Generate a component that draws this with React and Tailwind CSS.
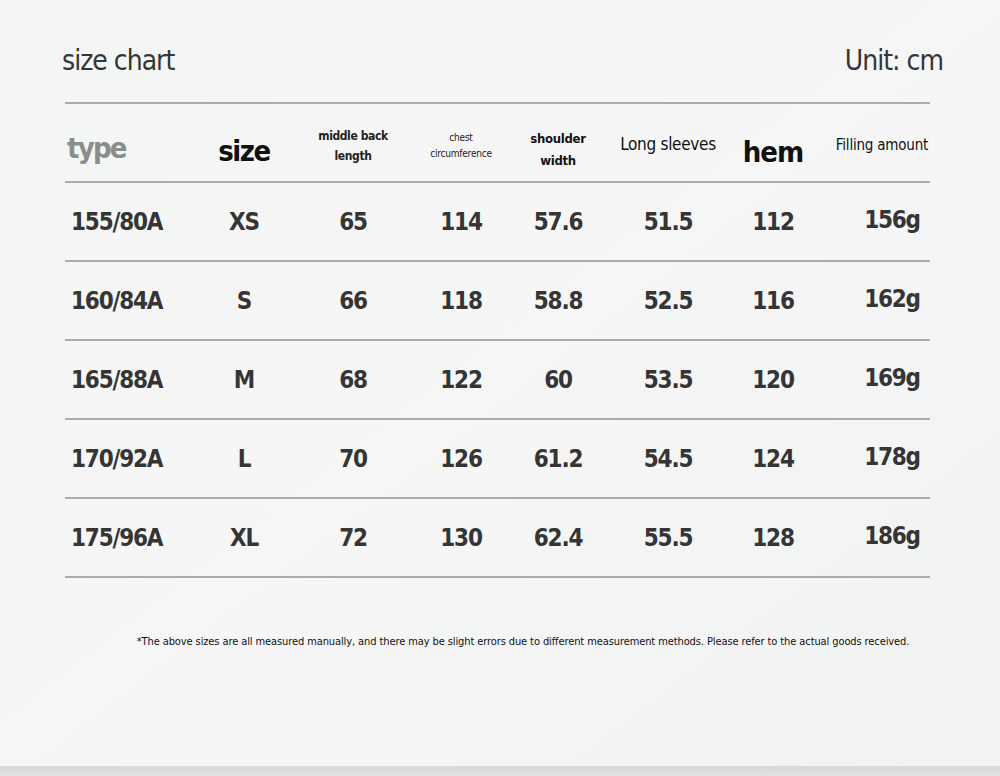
import React from "react";

const rows = [
  ["155/80A", "XS", "65", "114", "57.6", "51.5", "112", "156g"],
  ["160/84A", "S", "66", "118", "58.8", "52.5", "116", "162g"],
  ["165/88A", "M", "68", "122", "60", "53.5", "120", "169g"],
  ["170/92A", "L", "70", "126", "61.2", "54.5", "124", "178g"],
  ["175/96A", "XL", "72", "130", "62.4", "55.5", "128", "186g"],
];

const cols = "grid grid-cols-[125px_108px_110px_106px_88px_132px_78px_118px] items-center";

const SizeChart = () => {
  return (
    <div
      className="relative w-[1000px] h-[776px] overflow-hidden bg-gradient-to-br from-[#f4f5f5] via-[#f6f6f6] to-[#f1f2f2]"
      style={{ fontFamily: '"DejaVu Sans Condensed", "DejaVu Sans", sans-serif' }}
    >
      <div className="flex items-end justify-between pl-[62px] pr-[57px] pt-[33px] text-[#353535]">
        <h1 className="text-[28px] leading-[40px] tracking-[-1px]">size chart</h1>
        <div className="text-[28px] leading-[40px] tracking-[-1px] mt-[8px]">Unit: cm</div>
      </div>

      <div className="ml-[65px] mt-[21px] w-[865px] border-t-2 border-[#ababab]">
        {/* header */}
        <div className={`${cols} h-[79px] border-b-2 border-[#ababab] text-center leading-none`}>
          <div className="text-left pl-[2px] pt-[12px] text-[29px] font-bold tracking-[-1.8px] text-[#8c8c8c]">type</div>
          <div className="pt-[18px] text-[29px] font-bold tracking-[-1.5px] text-[#111]">size</div>
          <div className="pt-[6px] text-[12px] leading-[20px] font-bold tracking-[-0.4px] text-[#222]">
            middle back
            <br />
            length
          </div>
          <div className="pt-[6px] text-[10px] leading-[16px] tracking-[-0.2px] text-[#222]">
            chest
            <br />
            circumference
          </div>
          <div className="pt-[14px] text-[13px] leading-[22px] font-bold tracking-[-0.3px] text-[#111]">
            shoulder
            <br />
            width
          </div>
          <div className="pt-[4px] text-[17px] tracking-[-0.3px] text-[#111]">Long sleeves</div>
          <div className="pt-[20px] text-[29px] font-bold tracking-[-1px] text-[#111]">hem</div>
          <div className="pt-[6px] pl-[22px] text-[15px] tracking-[-0.2px] text-[#111] whitespace-nowrap">Filling amount</div>
        </div>

        {rows.map((r) => (
          <div
            key={r[0]}
            className={`${cols} h-[79px] border-b-2 border-[#ababab] text-center text-[24px] font-bold tracking-[-1.2px] text-[#353535]`}
          >
            <div className="text-left pl-[6px]">{r[0]}</div>
            <div>{r[1]}</div>
            <div>{r[2]}</div>
            <div>{r[3]}</div>
            <div>{r[4]}</div>
            <div>{r[5]}</div>
            <div>{r[6]}</div>
            <div className="pl-[42px] -mt-[4px]">{r[7]}</div>
          </div>
        ))}
      </div>

      <p className="mt-[56px] text-center pl-[46px] text-[11px] tracking-[-0.1px] text-[#111]">
        *The above sizes are all measured manually, and there may be slight errors due to different measurement methods. Please refer to the actual goods received.
      </p>

      <div className="absolute bottom-0 left-0 h-[10px] w-full bg-gradient-to-b from-[#d8d8d8] to-[#e2e2e2]" />
    </div>
  );
};

export default function App() {
  return <SizeChart />;
}
